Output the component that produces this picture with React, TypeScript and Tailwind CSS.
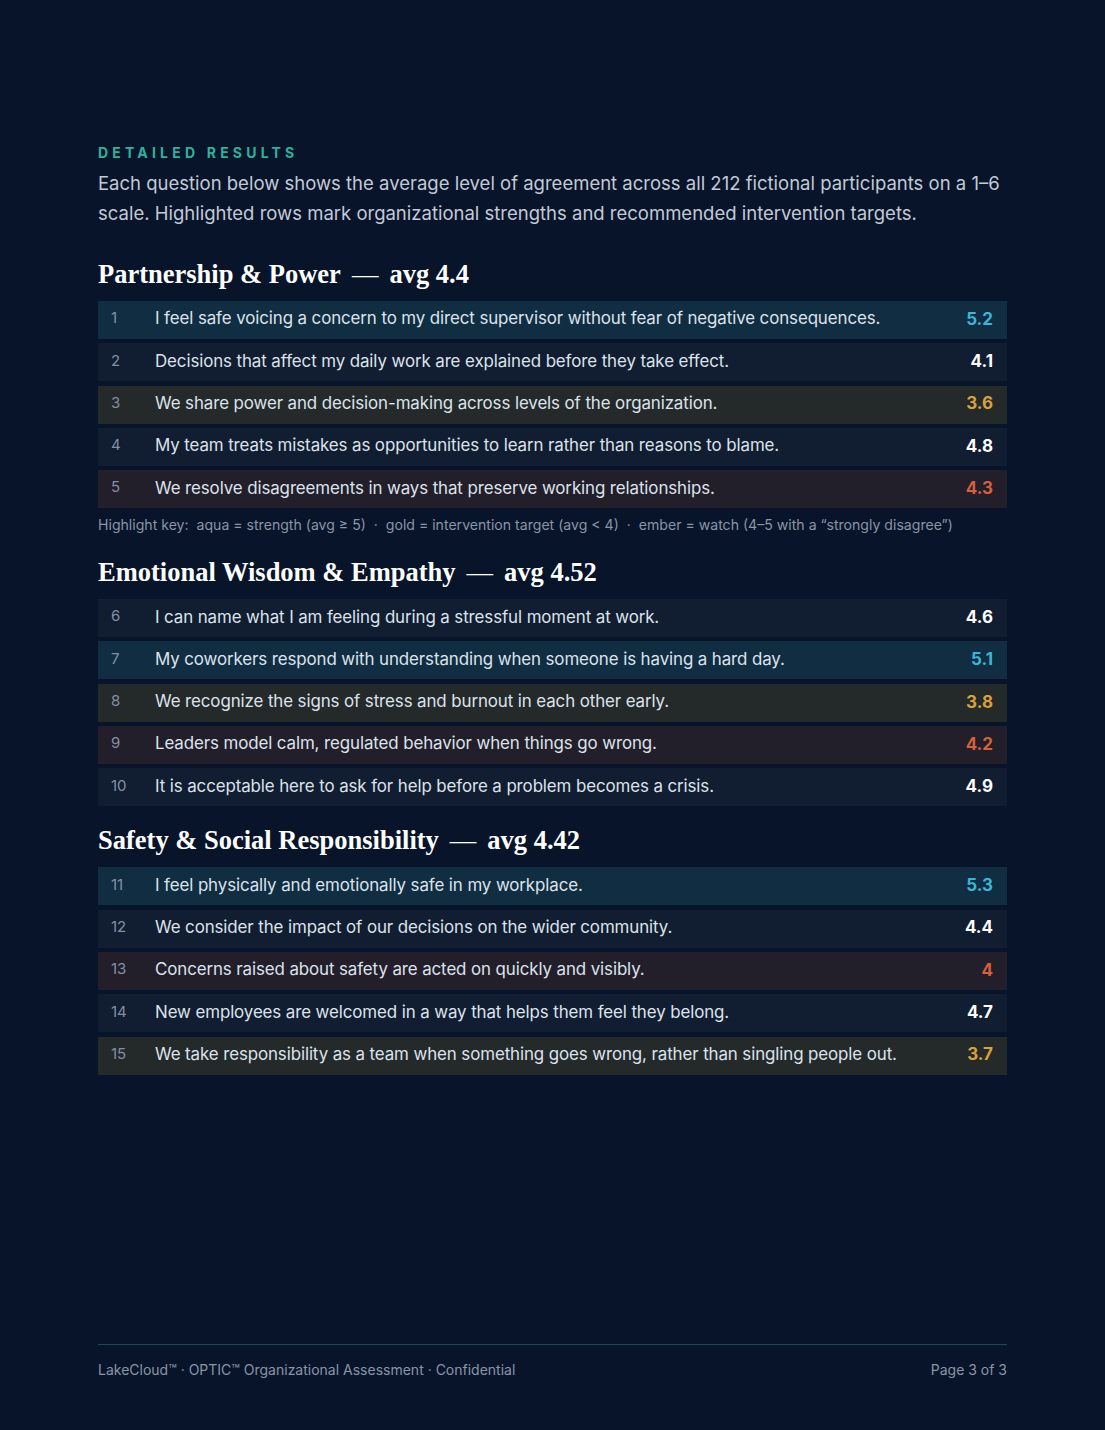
import React from "react";

type Tone = "aqua" | "gold" | "ember" | "none";
type Row = { n: number; q: string; v: string; t: Tone };
type Section = { title: string; avg: string; rows: Row[] };

const sections: Section[] = [
  {
    title: "Partnership & Power",
    avg: "4.4",
    rows: [
      { n: 1, q: "I feel safe voicing a concern to my direct supervisor without fear of negative consequences.", v: "5.2", t: "aqua" },
      { n: 2, q: "Decisions that affect my daily work are explained before they take effect.", v: "4.1", t: "none" },
      { n: 3, q: "We share power and decision-making across levels of the organization.", v: "3.6", t: "gold" },
      { n: 4, q: "My team treats mistakes as opportunities to learn rather than reasons to blame.", v: "4.8", t: "none" },
      { n: 5, q: "We resolve disagreements in ways that preserve working relationships.", v: "4.3", t: "ember" },
    ],
  },
  {
    title: "Emotional Wisdom & Empathy",
    avg: "4.52",
    rows: [
      { n: 6, q: "I can name what I am feeling during a stressful moment at work.", v: "4.6", t: "none" },
      { n: 7, q: "My coworkers respond with understanding when someone is having a hard day.", v: "5.1", t: "aqua" },
      { n: 8, q: "We recognize the signs of stress and burnout in each other early.", v: "3.8", t: "gold" },
      { n: 9, q: "Leaders model calm, regulated behavior when things go wrong.", v: "4.2", t: "ember" },
      { n: 10, q: "It is acceptable here to ask for help before a problem becomes a crisis.", v: "4.9", t: "none" },
    ],
  },
  {
    title: "Safety & Social Responsibility",
    avg: "4.42",
    rows: [
      { n: 11, q: "I feel physically and emotionally safe in my workplace.", v: "5.3", t: "aqua" },
      { n: 12, q: "We consider the impact of our decisions on the wider community.", v: "4.4", t: "none" },
      { n: 13, q: "Concerns raised about safety are acted on quickly and visibly.", v: "4", t: "ember" },
      { n: 14, q: "New employees are welcomed in a way that helps them feel they belong.", v: "4.7", t: "none" },
      { n: 15, q: "We take responsibility as a team when something goes wrong, rather than singling people out.", v: "3.7", t: "gold" },
    ],
  },
];

const rowBg: Record<Tone, string> = {
  aqua: "bg-[#102d42]",
  gold: "bg-[#24292a]",
  ember: "bg-[#221e2a]",
  none: "bg-[#111d30]",
};
const valColor: Record<Tone, string> = {
  aqua: "text-[#3ab6d6]",
  gold: "text-[#d9a13a]",
  ember: "text-[#d6603b]",
  none: "text-white",
};

const sans = "font-['Inter','Noto_Sans',sans-serif]";
const serif = "font-['Liberation_Serif','DejaVu_Serif',serif]";

function SectionBlock({ s }: { s: Section }) {
  return (
    <div>
      <h2 className={`${serif} text-[26.5px] font-bold text-white leading-[32px] mb-[11px]`}>
        {s.title}
        <span className="mx-[11px] font-normal">—</span>
        avg {s.avg}
      </h2>
      <div className="flex flex-col gap-[4.3px]">
        {s.rows.map((r) => (
          <div key={r.n} className={`${rowBg[r.t]} h-[38px] flex items-center pl-[13px] pr-[14px]`}>
            <div className="w-[44px] text-[15px] text-[#8390a4] -mt-[3px]">{r.n}</div>
            <div className="flex-1 text-[16.9px] text-[#dde3ec] tracking-[-0.1px] -mt-[2px]">{r.q}</div>
            <div className={`${valColor[r.t]} text-[17px] font-bold -mt-[1px]`}>{r.v}</div>
          </div>
        ))}
      </div>
    </div>
  );
}

export default function App() {
  return (
    <div className={`${sans} w-[1105px] h-[1430px] bg-[#07142a] flex flex-col px-[98px]`}>
      <div className="pt-[144px] flex-1">
        <div className="text-[14px] font-bold tracking-[0.3em] text-[#2bb39f] leading-[18px]">DETAILED RESULTS</div>
        <p className="mt-[6px] text-[18.5px] leading-[30px] text-[#c3cad6]">
          Each question below shows the average level of agreement across all 212 fictional participants on a 1–6
          scale. Highlighted rows mark organizational strengths and recommended intervention targets.
        </p>
        <div className="mt-[30px]">
          <SectionBlock s={sections[0]} />
        </div>
        <div className="mt-[8px] text-[14.1px] text-[#8b95a6] leading-[18px]">
          Highlight key:&nbsp; aqua = strength (avg ≥ 5) &nbsp;·&nbsp; gold = intervention target (avg &lt; 4) &nbsp;·&nbsp; ember = watch (4–5 with a “strongly disagree”)
        </div>
        <div className="mt-[22px]">
          <SectionBlock s={sections[1]} />
        </div>
        <div className="mt-[18px]">
          <SectionBlock s={sections[2]} />
        </div>
      </div>
      <div className="border-t border-[#1d4a50] pt-[14px] pb-[50px] flex justify-between text-[14px] text-[#8b95a6]">
        <span>LakeCloud™ · OPTIC™ Organizational Assessment · Confidential</span>
        <span>Page 3 of 3</span>
      </div>
    </div>
  );
}
